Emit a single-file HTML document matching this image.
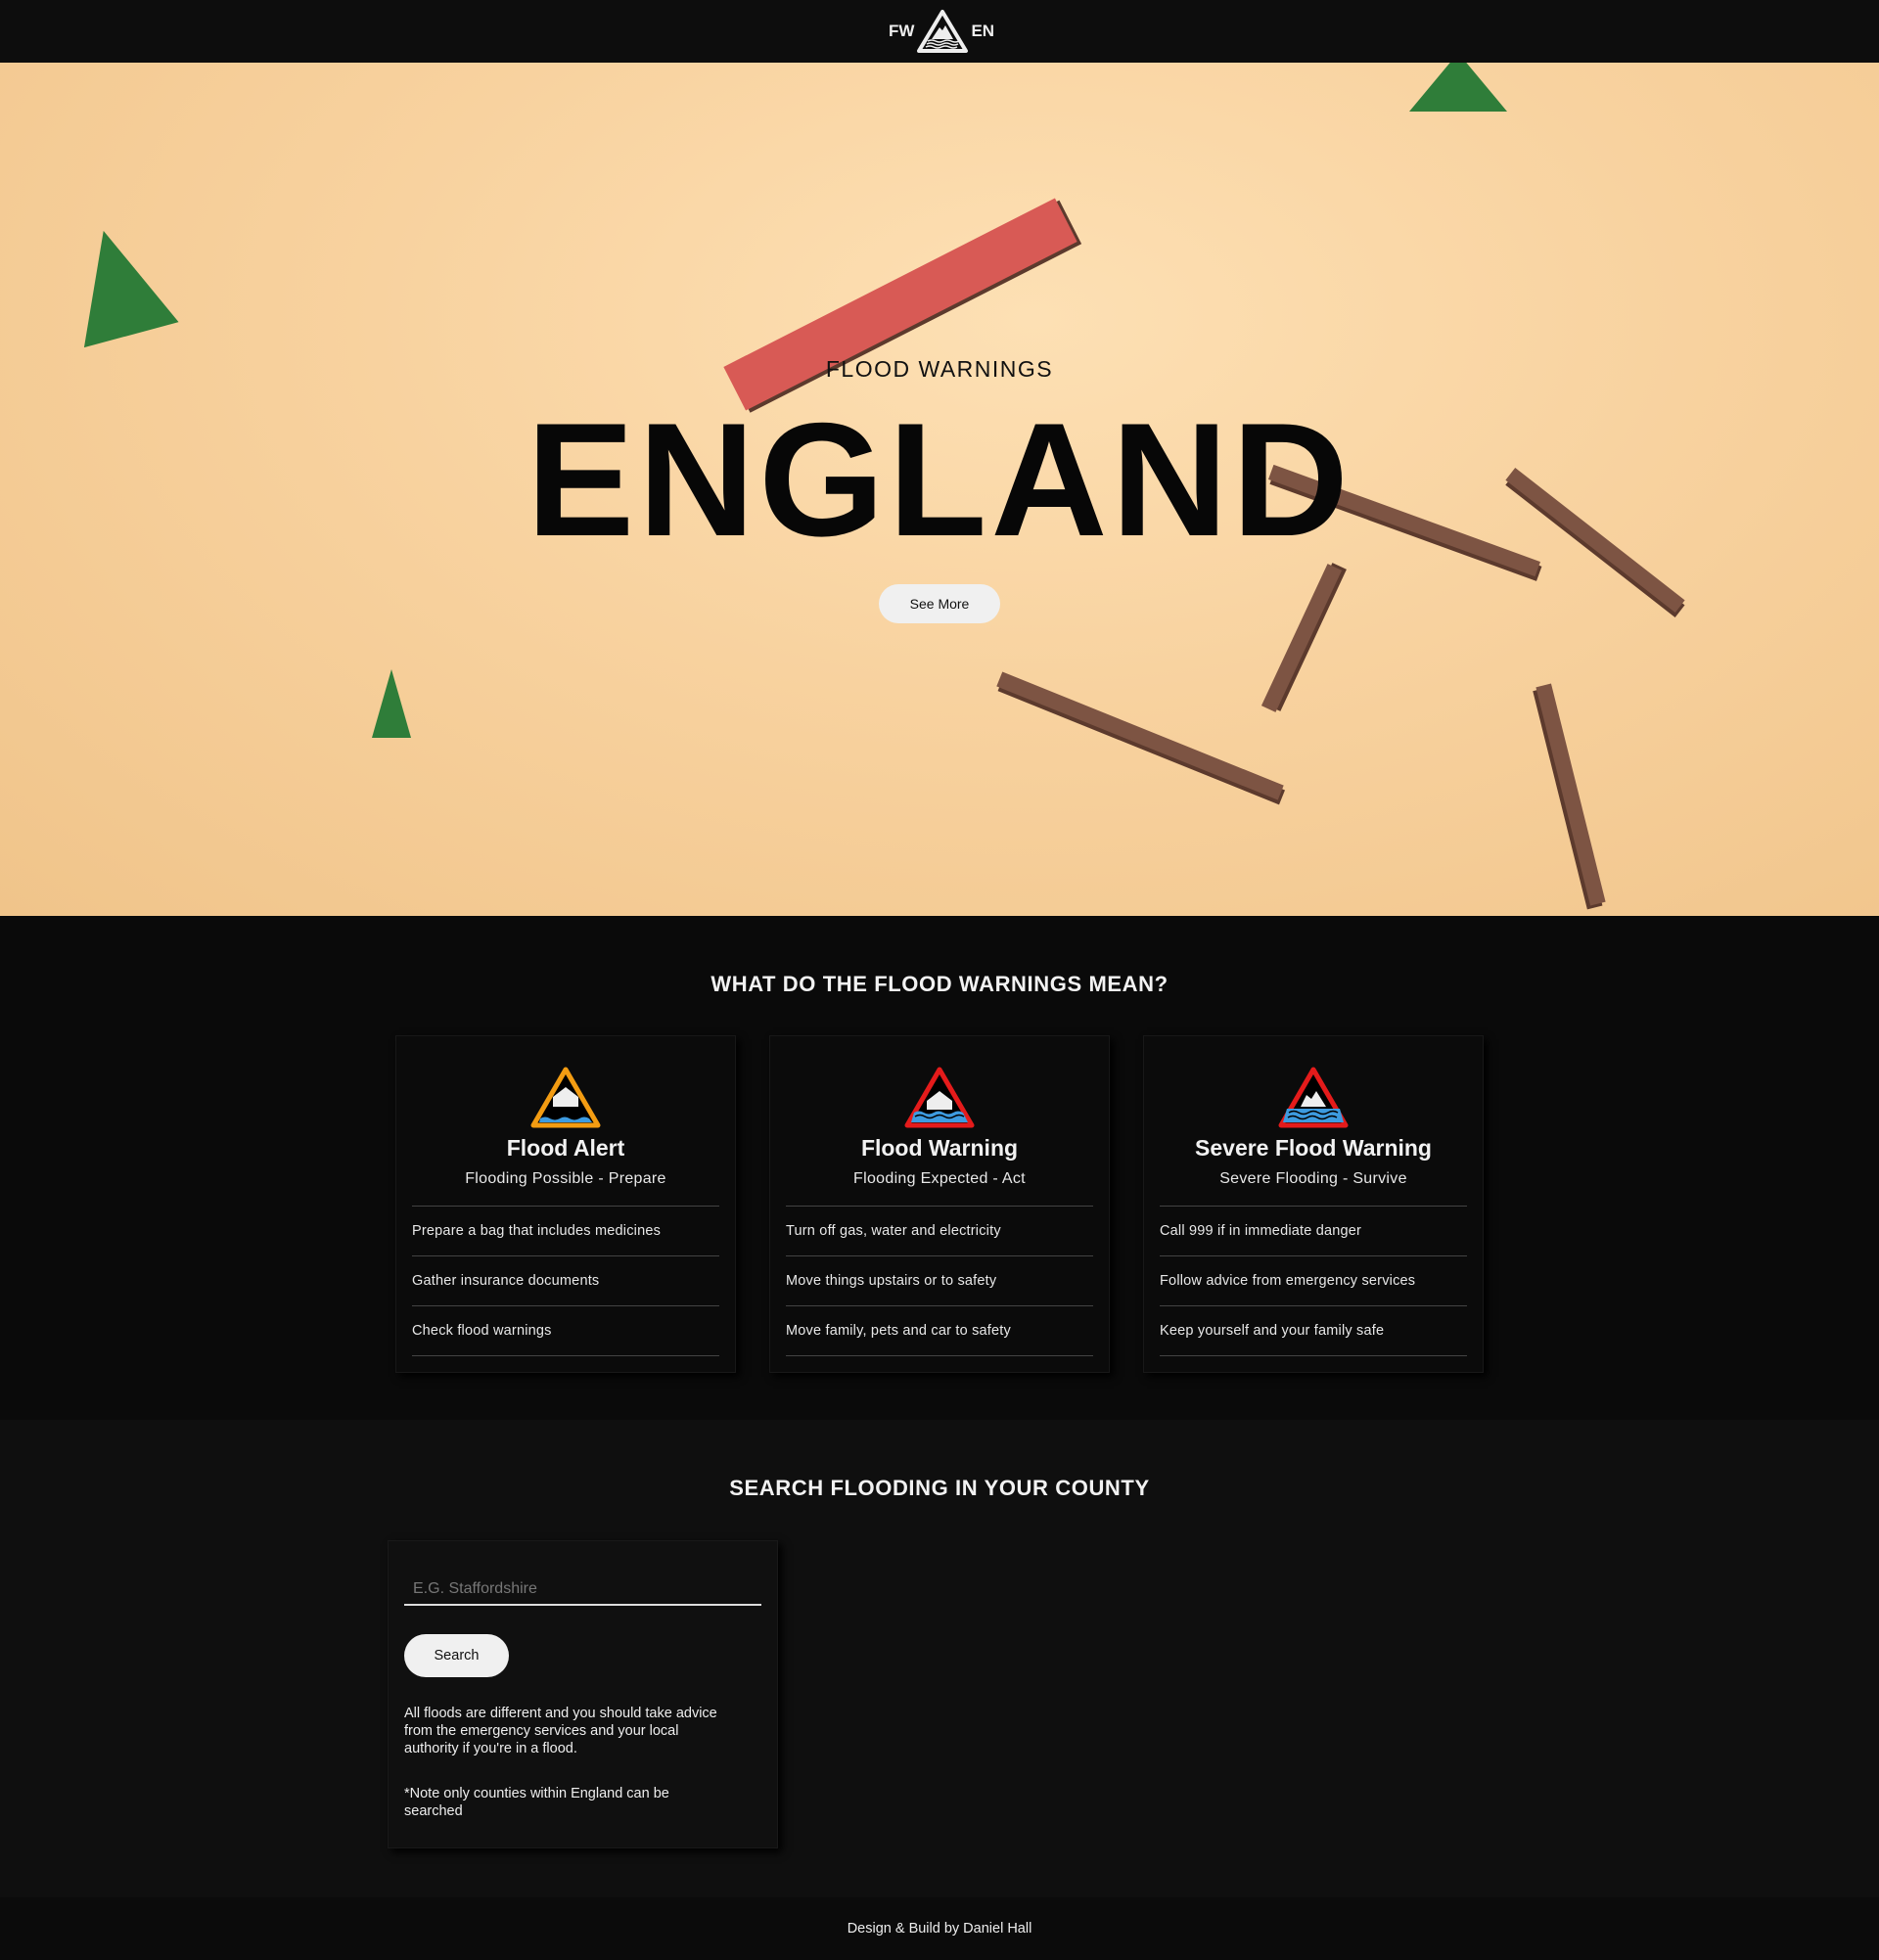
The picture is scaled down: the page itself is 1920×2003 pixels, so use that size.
<!DOCTYPE html>
<html><head><meta charset="utf-8"><style>
*{margin:0;padding:0;box-sizing:border-box}
body{width:1920px;height:2003px;background:#0f0f0f;font-family:"Liberation Sans",Arial,sans-serif;color:#eee;overflow:hidden}
.hdr{height:64px;background:#0d0d0d;position:relative}
.logo{position:absolute;left:908px;top:9px;display:flex;align-items:center;gap:2px;font-weight:bold;font-size:17px;color:#eee}
.hero{position:relative;height:872px;overflow:hidden;background:radial-gradient(ellipse at 55% 30%,#fde0b4 0%,#f8d29f 45%,#f0c48a 100%)}
.pl{position:absolute;background:#7d5443;box-shadow:3px 4px 0 #5c3a2d}
.tree{position:absolute;width:0;height:0;border-left:30px solid transparent;border-right:30px solid transparent;border-bottom:110px solid #2f7d39}
.h1{position:absolute;top:300px;width:100%;text-align:center;font-size:23px;color:#111;letter-spacing:1.5px}
.h2{position:absolute;top:332px;width:100%;text-align:center;font-size:165px;font-weight:bold;color:#070707;letter-spacing:4px}
.btn{position:absolute;left:898px;top:533px;width:124px;height:40px;border-radius:20px;background:#f0f0f0;color:#111;font-size:14px;text-align:center;line-height:40px}
.s2{height:515px;background:#0a0a0a;position:relative}
.t{position:absolute;width:100%;text-align:center;font-size:22px;font-weight:bold;color:#f2f2f2;letter-spacing:0.6px}
.card{position:absolute;top:122px;width:348px;height:345px;background:#0b0b0b;border:1px solid #181818;box-shadow:4px 4px 8px #000;padding:0 16px;text-align:center}
.card svg{margin-top:30px}
.card h3{font-size:23px;margin-top:0px;color:#f2f2f2}
.card .sub{font-size:16px;margin-top:9px;color:#e8e8e8;padding-bottom:18px;border-bottom:1px solid #444;letter-spacing:0.3px}
.card li{list-style:none;text-align:left;font-size:14.5px;height:51px;line-height:51px;border-bottom:1px solid #444;color:#e8e8e8;letter-spacing:0.2px}
.s3{height:488px;position:relative;background:#0f0f0f}
.sc{position:absolute;left:396px;top:123px;width:399px;height:315px;background:#101010;border:1px solid #191919;box-shadow:4px 4px 8px #000;padding:0 16px}
.inp{margin-top:40px;height:26px;border-bottom:2px solid #ddd;color:#777;font-size:16px;padding-left:9px}
.sb{margin-top:29px;width:107px;height:44px;border-radius:22px;background:#f0f0f0;color:#111;font-size:14.5px;text-align:center;line-height:44px}
.p{font-size:14.5px;line-height:18px;margin-top:28px;color:#eee;white-space:nowrap}
.ft{height:64px;background:#0b0b0b;text-align:center;line-height:64px;font-size:14.5px;color:#eee}
</style></head><body>
<div class="hdr"><div class="logo">FW<svg width="54" height="46" viewBox="0 0 54 46"><path d="M27 3 L51 43 L3 43 Z" fill="none" stroke="#eee" stroke-width="4" stroke-linejoin="round"/><path d="M16 31 L24 19 L27 22 L30 17 L38 31Z" fill="#eee"/><path d="M12 33 q4 -2 8 0 t8 0 t8 0 t8 0 M11 36 q4 -2 8 0 t8 0 t8 0 t8 0 M10 39 q4 -2 8 0 t8 0 t8 0 t8 0" stroke="#eee" stroke-width="1.5" fill="none"/></svg>EN</div></div>
<div class="hero">
<div class="pl" style="left:730px;top:222px;width:380px;height:50px;background:#d85a55;transform:rotate(-27deg)"></div>
<div class="pl" style="left:1290px;top:460px;width:290px;height:16px;transform:rotate(20deg)"></div>
<div class="pl" style="left:1520px;top:480px;width:220px;height:16px;transform:rotate(38deg)"></div>
<div class="pl" style="left:1250px;top:580px;width:160px;height:16px;transform:rotate(-65deg)"></div>
<div class="pl" style="left:1010px;top:680px;width:310px;height:16px;transform:rotate(22deg)"></div>
<div class="pl" style="left:1490px;top:740px;width:230px;height:16px;transform:rotate(76deg)"></div>
<div class="tree" style="left:70px;top:170px;border-left-width:50px;border-right-width:50px;transform:rotate(-15deg)"></div>
<div class="tree" style="left:380px;top:620px;border-left-width:20px;border-right-width:20px;border-bottom-width:70px"></div>
<div class="tree" style="left:1440px;top:-10px;border-left-width:50px;border-right-width:50px;border-bottom-width:60px"></div>
<div class="h1">FLOOD WARNINGS</div>
<div class="h2">ENGLAND</div>
<div class="btn">See More</div>
</div>
<div class="s2">
<div class="t" style="top:57px">WHAT DO THE FLOOD WARNINGS MEAN?</div>
<div class="card" style="left:404px"><svg width="74" height="66" viewBox="0 0 74 66"><path d="M37 4 L70 61 L4 61 Z" fill="#000" stroke="#f39c12" stroke-width="5" stroke-linejoin="round"/><path d="M24 42 L24 32 L37 22 L50 32 L50 42Z" fill="#eee"/><path d="M11 54 q5 -3 10 0 t10 0 t10 0 t10 0 t10 0 L64 58 L10 58Z" fill="#3d9be0"/></svg><h3>Flood Alert</h3><div class="sub">Flooding Possible - Prepare</div><ul><li>Prepare a bag that includes medicines</li><li>Gather insurance documents</li><li>Check flood warnings</li></ul></div>
<div class="card" style="left:786px"><svg width="74" height="66" viewBox="0 0 74 66"><path d="M37 4 L70 61 L4 61 Z" fill="#000" stroke="#e41b1b" stroke-width="5" stroke-linejoin="round"/><path d="M24 45 L24 36 L37 26 L50 36 L50 45Z" fill="#eee"/><path d="M11 48 q5 -3 10 0 t10 0 t10 0 t10 0 t10 0 L66 58 L8 58Z" fill="#3d9be0"/><path d="M12 52 q5 -3 10 0 t10 0 t10 0 t10 0 t10 0" stroke="#000" stroke-width="1.5" fill="none"/></svg><h3>Flood Warning</h3><div class="sub">Flooding Expected - Act</div><ul><li>Turn off gas, water and electricity</li><li>Move things upstairs or to safety</li><li>Move family, pets and car to safety</li></ul></div>
<div class="card" style="left:1168px"><svg width="74" height="66" viewBox="0 0 74 66"><path d="M37 4 L70 61 L4 61 Z" fill="#000" stroke="#e41b1b" stroke-width="5" stroke-linejoin="round"/><path d="M24 42 L30 30 L35 34 L40 26 L50 42Z" fill="#eee"/><path d="M10 44 L64 44 L68 58 L6 58Z" fill="#3d9be0"/><path d="M12 48 q5 -3 10 0 t10 0 t10 0 t10 0 t10 0 M11 53 q5 -3 10 0 t10 0 t10 0 t10 0 t10 0" stroke="#000" stroke-width="1.5" fill="none"/></svg><h3>Severe Flood Warning</h3><div class="sub">Severe Flooding - Survive</div><ul><li>Call 999 if in immediate danger</li><li>Follow advice from emergency services</li><li>Keep yourself and your family safe</li></ul></div>
</div>
<div class="s3">
<div class="t" style="top:57px">SEARCH FLOODING IN YOUR COUNTY</div>
<div class="sc"><div class="inp">E.G. Staffordshire</div><div class="sb">Search</div>
<div class="p">All floods are different and you should take advice<br>from the emergency services and your local<br>authority if you're in a flood.</div>
<div class="p" style="margin-top:28px">*Note only counties within England can be<br>searched</div></div>
</div>
<div class="ft">Design &amp; Build by Daniel Hall</div>
</body></html>
